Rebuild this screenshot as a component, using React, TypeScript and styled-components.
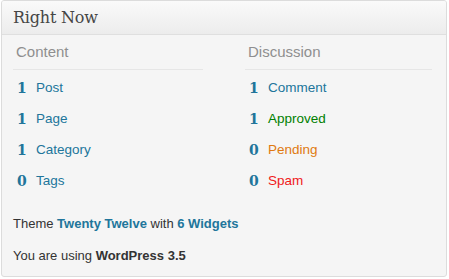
import React from "react";
import styled, { createGlobalStyle } from "styled-components";

const Global = createGlobalStyle`
  html, body { margin: 0; padding: 0; background: #ffffff; }
  body { font-family: "Liberation Sans", Arial, sans-serif; }
`;

const Panel = styled.div`
  box-sizing: border-box;
  margin: 0 0 0 1px;
  width: 446px;
  height: 277px;
  border: 1px solid #dcdcdc;
  border-radius: 3px;
  background: #f5f5f5;
  overflow: hidden;
  display: flex;
  flex-direction: column;
`;

const Header = styled.div`
  height: 34px;
  flex-shrink: 0;
  box-sizing: border-box;
  border-bottom: 1px solid #dfdfdf;
  background: linear-gradient(to bottom, #fafafa, #ececec);
  display: flex;
  align-items: center;
  padding-left: 11px;
`;

const Title = styled.h3`
  margin: 0;
  font-family: "DejaVu Serif", Georgia, serif;
  font-weight: normal;
  font-size: 16px;
  letter-spacing: -0.2px;
  color: #464646;
  line-height: 20px;
`;

const Columns = styled.div`
  display: flex;
  padding: 0 14px 0 11px;
  justify-content: space-between;
`;

const Column = styled.div<{ $w: number }>`
  width: ${(p) => p.$w}px;
  display: flex;
  flex-direction: column;
`;

const ColHead = styled.div`
  font-size: 15px;
  line-height: 18px;
  color: #8f8f8f;
  padding: 8px 0 8px 3px;
  border-bottom: 1px solid #e6e6e6;
  margin-bottom: 2px;
`;

const Row = styled.div`
  height: 31px;
  display: flex;
  align-items: center;
`;

const Count = styled.span`
  width: 19px;
  padding-left: 4px;
  font-family: "DejaVu Serif", Georgia, serif;
  font-weight: bold;
  font-size: 14px;
  color: #21759b;
`;

const Label = styled.span<{ $c: string }>`
  font-size: 13.5px;
  color: ${(p) => p.$c};
`;

const Footer = styled.div`
  padding: 19px 0 0 11px;
  display: flex;
  flex-direction: column;
  gap: 14px;
`;

const Line = styled.p`
  margin: 0;
  font-size: 13px;
  line-height: 18px;
  color: #333333;
`;

const Link = styled.a`
  color: #21759b;
  font-weight: bold;
  text-decoration: none;
`;

const Strong = styled.b`
  color: #333333;
`;

const content = [
  { n: "1", t: "Post", c: "#21759b" },
  { n: "1", t: "Page", c: "#21759b" },
  { n: "1", t: "Category", c: "#21759b" },
  { n: "0", t: "Tags", c: "#21759b" },
];
const discussion = [
  { n: "1", t: "Comment", c: "#21759b" },
  { n: "1", t: "Approved", c: "#008000" },
  { n: "0", t: "Pending", c: "#e07a10" },
  { n: "0", t: "Spam", c: "#f01a1a" },
];

export default function App() {
  return (
    <>
      <Global />
      <Panel>
        <Header>
          <Title>Right Now</Title>
        </Header>
        <Columns>
          <Column $w={190}>
            <ColHead>Content</ColHead>
            {content.map((r) => (
              <Row key={r.t}>
                <Count>{r.n}</Count>
                <Label $c={r.c}>{r.t}</Label>
              </Row>
            ))}
          </Column>
          <Column $w={187}>
            <ColHead>Discussion</ColHead>
            {discussion.map((r) => (
              <Row key={r.t}>
                <Count>{r.n}</Count>
                <Label $c={r.c}>{r.t}</Label>
              </Row>
            ))}
          </Column>
        </Columns>
        <Footer>
          <Line>
            Theme <Link href="#">Twenty Twelve</Link> with <Link href="#">6 Widgets</Link>
          </Line>
          <Line>
            You are using <Strong>WordPress 3.5</Strong>
          </Line>
        </Footer>
      </Panel>
    </>
  );
}
